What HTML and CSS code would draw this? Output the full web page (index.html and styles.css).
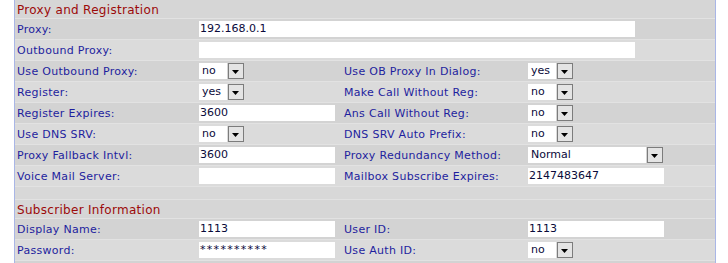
FILE: index.html
```html
<!DOCTYPE html>
<html lang="en">
<head>
    <meta charset="UTF-8">
    <title>Proxy and Registration</title>
    <link rel="stylesheet" href="styles.css">
</head>
<body>

    <div class="panel">

        <!-- Proxy and Registration -->
        <div class="section-title">Proxy and Registration</div>

        <div class="row dark">
            <div class="label">Proxy:</div>
            <div class="value span3"><div class="field wide">192.168.0.1</div></div>
        </div>

        <div class="row light">
            <div class="label">Outbound Proxy:</div>
            <div class="value span3"><div class="field wide"></div></div>
        </div>

        <div class="row dark">
            <div class="label">Use Outbound Proxy:</div>
            <div class="value"><div class="select"><span class="select-val">no</span><span class="select-btn"><svg width="8" height="4" viewBox="0 0 8 4"><path d="M0 0h7L3.5 4z" fill="#000"/></svg></span></div></div>
            <div class="label">Use OB Proxy In Dialog:</div>
            <div class="value"><div class="select"><span class="select-val">yes</span><span class="select-btn"><svg width="8" height="4" viewBox="0 0 8 4"><path d="M0 0h7L3.5 4z" fill="#000"/></svg></span></div></div>
        </div>

        <div class="row light">
            <div class="label">Register:</div>
            <div class="value"><div class="select"><span class="select-val">yes</span><span class="select-btn"><svg width="8" height="4" viewBox="0 0 8 4"><path d="M0 0h7L3.5 4z" fill="#000"/></svg></span></div></div>
            <div class="label">Make Call Without Reg:</div>
            <div class="value"><div class="select"><span class="select-val">no</span><span class="select-btn"><svg width="8" height="4" viewBox="0 0 8 4"><path d="M0 0h7L3.5 4z" fill="#000"/></svg></span></div></div>
        </div>

        <div class="row dark">
            <div class="label">Register Expires:</div>
            <div class="value"><div class="field">3600</div></div>
            <div class="label">Ans Call Without Reg:</div>
            <div class="value"><div class="select"><span class="select-val">no</span><span class="select-btn"><svg width="8" height="4" viewBox="0 0 8 4"><path d="M0 0h7L3.5 4z" fill="#000"/></svg></span></div></div>
        </div>

        <div class="row light">
            <div class="label">Use DNS SRV:</div>
            <div class="value"><div class="select"><span class="select-val">no</span><span class="select-btn"><svg width="8" height="4" viewBox="0 0 8 4"><path d="M0 0h7L3.5 4z" fill="#000"/></svg></span></div></div>
            <div class="label">DNS SRV Auto Prefix:</div>
            <div class="value"><div class="select"><span class="select-val">no</span><span class="select-btn"><svg width="8" height="4" viewBox="0 0 8 4"><path d="M0 0h7L3.5 4z" fill="#000"/></svg></span></div></div>
        </div>

        <div class="row dark">
            <div class="label">Proxy Fallback Intvl:</div>
            <div class="value"><div class="field">3600</div></div>
            <div class="label">Proxy Redundancy Method:</div>
            <div class="value"><div class="select long"><span class="select-val">Normal</span><span class="select-btn"><svg width="8" height="4" viewBox="0 0 8 4"><path d="M0 0h7L3.5 4z" fill="#000"/></svg></span></div></div>
        </div>

        <div class="row light">
            <div class="label">Voice Mail Server:</div>
            <div class="value"><div class="field"></div></div>
            <div class="label">Mailbox Subscribe Expires:</div>
            <div class="value"><div class="field">2147483647</div></div>
        </div>

        <div class="spacer"></div>

        <!-- Subscriber Information -->
        <div class="section-title">Subscriber Information</div>

        <div class="row dark">
            <div class="label">Display Name:</div>
            <div class="value"><div class="field">1113</div></div>
            <div class="label">User ID:</div>
            <div class="value"><div class="field">1113</div></div>
        </div>

        <div class="row light">
            <div class="label">Password:</div>
            <div class="value"><div class="field password">**********</div></div>
            <div class="label">Use Auth ID:</div>
            <div class="value"><div class="select"><span class="select-val">no</span><span class="select-btn"><svg width="8" height="4" viewBox="0 0 8 4"><path d="M0 0h7L3.5 4z" fill="#000"/></svg></span></div></div>
        </div>

        <div class="row dark">
            <div class="label"></div>
            <div class="value"><div class="field"></div></div>
        </div>

    </div>

</body>
</html>
```

FILE: styles.css
```css
body {
    margin: 0;
    background: #fff;
    font-family: "DejaVu Sans", Verdana, sans-serif;
    font-size: 11px;
}

.panel {
    margin-left: 14px;
    width: 700px;
    border-left: 1px solid #a9b6e6;
    border-right: 1px solid #a9b6e6;
    background: #e2e2e2;
    display: flex;
    flex-direction: column;
    gap: 1px;
    height: 263px;
    overflow: hidden;
}

.section-title {
    height: 18px;
    line-height: 20px;
    padding-left: 2px;
    color: #9c0a0a;
    font-size: 12px;
    letter-spacing: 0.3px;
    background: #d6d6d6;
    flex-shrink: 0;
}

.spacer {
    height: 12px;
    background: #d8d8d8;
    flex-shrink: 0;
}

.row {
    display: grid;
    grid-template-columns: 182px 145px 184px 1fr;
    height: 20px;
    align-items: center;
    flex-shrink: 0;
}

.row.dark {
    background: #d3d3d3;
}

.row.light {
    background: #dbdbdb;
}

.label {
    padding-left: 2px;
    color: #1e1e9e;
    letter-spacing: 0.3px;
    white-space: nowrap;
}

.value {
    padding-left: 2px;
}

.span3 {
    grid-column: 2 / 5;
}

/* 텍스트 입력 칸 */
.field {
    width: 136px;
    height: 16px;
    line-height: 16px;
    background: #fff;
    color: #0a0a3a;
    padding-left: 1px;
    box-sizing: border-box;
    white-space: nowrap;
    overflow: hidden;
}

.field.wide {
    width: 436px;
}

.field.password {
    letter-spacing: 1.3px;
}

/* 드롭다운 */
.select {
    display: flex;
    align-items: center;
    height: 17px;
}

.select-val {
    width: 28px;
    height: 16px;
    line-height: 16px;
    background: #fff;
    color: #0a0a3a;
    padding-left: 3px;
    box-sizing: border-box;
    margin-right: 1px;
}

.select.long .select-val {
    width: 118px;
}

.select-btn {
    width: 16px;
    height: 16px;
    box-sizing: border-box;
    border: 1px solid #7c7c7c;
    background: #e4e4e4;
    display: flex;
    align-items: center;
    justify-content: center;
    padding-top: 2px;
}
```
